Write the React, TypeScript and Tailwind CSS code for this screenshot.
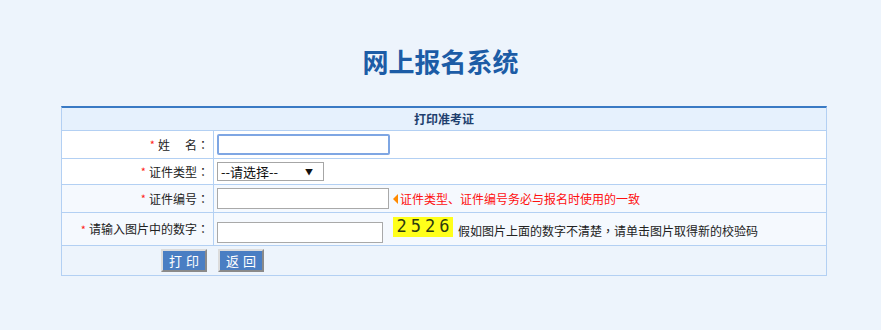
import React from "react";

const font = { fontFamily: '"Noto Sans CJK SC", "Noto Sans", sans-serif' };
const tc = { fontFamily: '"Noto Sans CJK TC", "Noto Sans CJK SC", sans-serif' };

function Colon() {
  return <span style={tc}>：</span>;
}

function Label({ text }: { text: React.ReactNode }) {
  return (
    <div className="w-[152px] shrink-0 border-r border-[#b3d0f3] flex items-center justify-end pr-[4px] text-[12px] text-[#222]">
      <span className="text-[#ff2020] mr-[3px] text-[11px]">*</span>
      {text}
      <Colon />
    </div>
  );
}

export default function App() {
  return (
    <div className="min-h-[330px] w-[881px] bg-[#edf4fc]" style={font}>
      <div className="h-[106px] flex items-center justify-center pt-[16px]">
        <h1 className="text-[26px] font-bold text-[#1c5ca6] leading-none tracking-[0px]">
          网上报名系统
        </h1>
      </div>
      <div className="ml-[61px] w-[766px] border border-[#b3d0f3] border-t-2 border-t-[#3a7ac4]">
        {/* header */}
        <div className="h-[23px] bg-[#e6f1fd] border-b border-[#b3d0f3] flex items-center justify-center text-[12px] font-bold text-[#1e3f6e]">
          打印准考证
        </div>
        {/* row 1 */}
        <div className="h-[28px] bg-white border-b border-[#b3d0f3] flex">
          <Label
            text={
              <>
                <span>姓</span>
                <span className="ml-[15px]">名</span>
              </>
            }
          />
          <div className="flex items-center pl-[3px]">
            <div className="w-[173px] h-[21px] border-2 border-[#7ea6e3] rounded-[2px] bg-white" />
          </div>
        </div>
        {/* row 2 */}
        <div className="h-[26px] bg-white border-b border-[#b3d0f3] flex">
          <Label text="证件类型" />
          <div className="flex items-center pl-[3px]">
            <div className="w-[107px] h-[19px] border border-[#a6a6a6] bg-white flex items-center justify-between pl-[3px] pr-[10px] text-[13px] text-[#111]">
              <span>--请选择--</span>
              <span className="text-[8px] leading-none">▼</span>
            </div>
          </div>
        </div>
        {/* row 3 */}
        <div className="h-[28px] bg-[#f5f9fe] border-b border-[#b3d0f3] flex">
          <Label text="证件编号" />
          <div className="flex items-center pl-[3px]">
            <div className="w-[172px] h-[21px] border border-[#a9a9a9] bg-white" />
            <span className="ml-[4px] w-0 h-0 border-y-[5px] border-y-transparent border-r-[5px] border-r-[#ff8a00]" />
            <span className="ml-[2px] text-[12px] text-[#ff1010]">
              证件类型、证件编号务必与报名时使用的一致
            </span>
          </div>
        </div>
        {/* row 4 */}
        <div className="h-[33px] bg-[#f5f9fe] border-b border-[#b3d0f3] flex">
          <Label text="请输入图片中的数字" />
          <div className="flex items-center pl-[3px]">
            <div className="w-[166px] h-[21px] border border-[#a9a9a9] bg-white mt-[6px]" />
            <div
              className="ml-[10px] w-[60px] h-[20px] bg-[#ffff1a] flex items-center justify-center text-[17px] text-[#2c3a10] tracking-[4px] pl-[4px] mb-[4px]"
              style={{ fontFamily: '"DejaVu Sans Mono", monospace' }}
            >
              2526
            </div>
            <span className="ml-[5px] text-[12px] text-[#222] mt-[4px]">
              假如图片上面的数字不清楚<span style={tc}>，</span>请单击图片取得新的校验码
            </span>
          </div>
        </div>
        {/* buttons */}
        <div className="h-[29px] bg-[#edf4fc] flex items-center pl-[99px] gap-[11px]">
          <button className="w-[46px] h-[23px] bg-[#4a7ec3] text-white text-[13px] tracking-[4px] pl-[4px] border-2 border-t-[#dcdcdc] border-l-[#dcdcdc] border-b-[#8a8a8a] border-r-[#8a8a8a] leading-none">
            打印
          </button>
          <button className="w-[46px] h-[23px] bg-[#4a7ec3] text-white text-[13px] tracking-[4px] pl-[4px] border-2 border-t-[#dcdcdc] border-l-[#dcdcdc] border-b-[#8a8a8a] border-r-[#8a8a8a] leading-none">
            返回
          </button>
        </div>
      </div>
    </div>
  );
}
